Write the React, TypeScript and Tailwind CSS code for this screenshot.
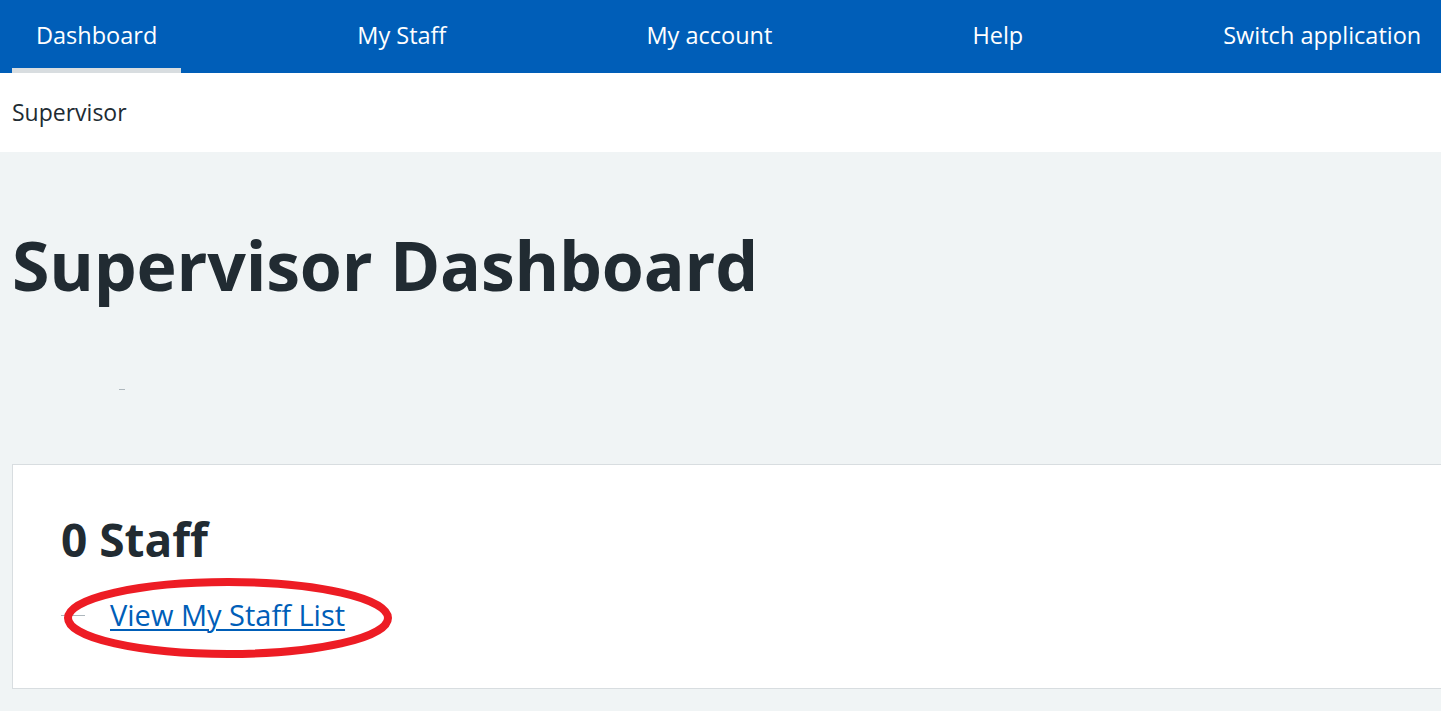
import React from "react";

const navItems = ["Dashboard", "My Staff", "My account", "Help", "Switch application"];

// Red annotation ring around the staff list link
function Ellipse() {
  return (
    <svg
      className="pointer-events-none absolute left-[60px] top-[574px]"
      width="336"
      height="90"
      viewBox="0 0 336 90"
    >
      <ellipse cx="168" cy="44" rx="160" ry="36" fill="none" stroke="#ed1c24" strokeWidth="8" />
    </svg>
  );
}

export default function App() {
  return (
    <div
      className="relative min-h-[711px] overflow-hidden bg-[#f0f4f5] text-[#212b32]"
      style={{ fontFamily: '"Open Sans", "Noto Sans", sans-serif' }}
    >
      <nav className="flex h-[73px] items-stretch gap-[152px] bg-[#005eb8] px-3 whitespace-nowrap">
        {navItems.map((item, i) => (
          <a
            key={item}
            className={`flex items-center px-6 pb-px text-[23.5px] text-white ${
              i === 0 ? "border-b-[5px] border-[#d8dde0] pt-[5px]" : ""
            }`}
          >
            {item}
          </a>
        ))}
      </nav>

      <div className="flex h-[79px] items-center bg-white px-3 text-[23px]">Supervisor</div>

      <main className="px-3">
        <h1 className="pt-[72px] text-[68px] leading-[1.2] font-bold tracking-[-0.2px] whitespace-nowrap">
          Supervisor Dashboard
        </h1>

        <div className="relative h-[158px]">
          <span className="absolute left-[107px] top-[83px] h-px w-[6px] bg-[#aeb7bd]" />
        </div>

        <section className="mr-[-40px] h-[225px] border border-[#d8dde0] bg-white px-12 pt-[47px]">
          <h2 className="text-[46px] leading-[1.2] font-bold">0 Staff</h2>
          <div className="mt-[31px] flex items-center">
            <span className="mr-[25px] h-px w-[24px] bg-[#aeb7bd]" />
            <a className="text-[29px] leading-[1.2] text-[#005eb8] underline decoration-2 underline-offset-[3px]">
              View My Staff List
            </a>
          </div>
        </section>
      </main>

      <Ellipse />
    </div>
  );
}
